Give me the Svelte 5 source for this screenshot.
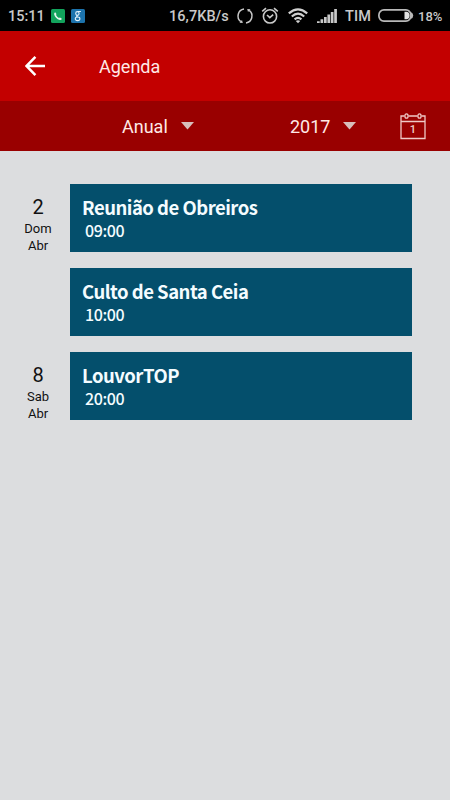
<script>
  let period = "Anual";
  let year = "2017";

  const days = [
    {
      day: 2,
      week: "Dom",
      month: "Abr",
      events: [
        { title: "Reunião de Obreiros", time: "09:00" },
        { title: "Culto de Santa Ceia", time: "10:00" },
      ],
    },
    {
      day: 8,
      week: "Sab",
      month: "Abr",
      events: [{ title: "LouvorTOP", time: "20:00" }],
    },
  ];
</script>

<div class="screen">
  <div class="status">
    <span class="clock">15:11</span>
    <svg class="app" width="14" height="14" viewBox="0 0 14 14">
      <rect width="14" height="14" rx="1.5" fill="#12a35c" />
      <path d="M4.2 3.2 5.5 4.9 5 6.1Q6 8 7.9 9L9 8.4 10.9 9.7Q10.4 11.4 8.8 11 4.2 9.5 3.1 5.2 3 3.7 4.2 3.2Z" fill="#e4f5ec" />
    </svg>
    <svg class="app google" width="14" height="14" viewBox="0 0 14 14">
      <rect width="14" height="14" rx="1.5" fill="#1c73ac" />
      <g fill="none" stroke="#e2f2fb" stroke-width="1.1">
        <ellipse cx="6.4" cy="4.5" rx="1.7" ry="1.9" />
        <path d="M7 2.5H9.9M6 6.4Q5 7.3 6.6 7.8" />
        <ellipse cx="6.6" cy="9.8" rx="2.3" ry="1.8" />
      </g>
    </svg>
    <span class="speed">16,7KB/s</span>
    <svg class="sync" width="18" height="18" viewBox="0 0 18 18">
      <path d="M8 2.100A7 7 0 0 0 4.800 14.600M10 15.900A7 7 0 0 0 13.200 3.400" fill="none" stroke="#c9c9c9" stroke-width="1.500" />
      <path d="M3.500 15.800 6.800 15.900 6 13ZM14.500 2.200 11.200 2.100 12 5Z" fill="#c9c9c9" />
    </svg>
    <svg class="alarm" width="18" height="18" viewBox="0 0 18 18">
      <g fill="none" stroke="#c9c9c9" stroke-width="1.6">
        <circle cx="9" cy="9.4" r="6.6" />
        <path d="M1.200 4.400 5 1.200M16.800 4.400 13 1.200M6 8 8.800 10.600 12.200 7.600" />
      </g>
    </svg>
    <svg class="wifi" width="20" height="16" viewBox="0 0 20 16">
      <g fill="none" stroke="#d0d0d0" stroke-width="2.2">
        <path d="M.8 5.400Q10-2.600 19.200 5.400M3.800 8.500Q10 2.800 16.200 8.500M6.600 11.400Q10 8.200 13.400 11.400" />
      </g>
      <path d="M7.8 13Q10 11.400 12.200 13L10 15.200Z" fill="#d0d0d0" />
    </svg>
    <svg class="signal" width="20" height="14" viewBox="0 0 20 14">
      <path d="M0 12.200h2.700V14H0zM3.500 10.200h2.700V14H3.500zM7 8h2.700v6H7zM10.400 5.600h2.700V14h-2.700zM13.800 3h2.700v11h-2.700zM17.200 0h2.700v14h-2.700z" fill="#c8c8c8" />
    </svg>
    <span class="carrier">TIM</span>
    <svg class="battery" width="36" height="13" viewBox="0 0 36 13">
      <rect x=".9" y=".9" width="32" height="11.2" rx="5" fill="none" stroke="#b9b9b9" stroke-width="1.7" />
      <path d="M26.500 2.700h2.500Q31.600 3.200 31.600 6.500T29 10.300h-2.500z" fill="#e4e4e4" />
      <path d="M33 3.200Q35.200 4 35.200 6.500T33 9.800z" fill="#b9b9b9" />
    </svg>
    <span class="percent">18%</span>
  </div>

  <header>
    <svg class="back" width="20" height="20" viewBox="0 0 20 20">
      <path d="M10.400 .9 1.600 10l8.800 9.100M1.600 10H20" fill="none" stroke="#fff" stroke-width="2.500" />
    </svg>
    <h1>Agenda</h1>
  </header>

  <div class="filters">
    <div class="select period">
      <span>{period}</span>
      <svg width="13" height="8" viewBox="0 0 13 8"><path d="M0 0h13L6.5 7.5z" fill="#d8bebb" /></svg>
    </div>
    <div class="select year">
      <span>{year}</span>
      <svg width="13" height="8" viewBox="0 0 13 8"><path d="M0 0h13L6.5 7.5z" fill="#d8bebb" /></svg>
    </div>
    <svg class="calendar" width="26" height="27" viewBox="0 0 26 27">
      <g fill="none" stroke="#f0c9c6" stroke-width="1.3">
        <path d="M4.500 3H1v22.500h24V3h-3.500M8.500 3h9M1 8.500h24" />
        <ellipse cx="6.500" cy="3" rx="1.600" ry="2.200" />
        <ellipse cx="19.500" cy="3" rx="1.600" ry="2.200" />
      </g>
      <text x="13" y="20">1</text>
    </svg>
  </div>

  <main>
    {#each days as item}
      <section>
        <div class="date">
          <strong>{item.day}</strong>
          <span>{item.week}</span>
          <span>{item.month}</span>
        </div>
        <div class="events">
          {#each item.events as event}
            <article>
              <h2>{event.title}</h2>
              <time>{event.time}</time>
            </article>
          {/each}
        </div>
      </section>
    {/each}
  </main>
</div>

<style>
  :global(body) {
    margin: 0;
    background: #dcdddf;
  }

  .screen {
    width: 450px;
    height: 800px;
    overflow: hidden;
    background: #dcdddf;
    font-family: Roboto, sans-serif;
  }

  svg {
    display: block;
    flex: none;
  }

  .status {
    display: flex;
    align-items: center;
    height: 31px;
    background: #000;
    color: #c9c9c9;
    font-size: 14.5px;
    font-weight: 500;
    line-height: 29px;
    white-space: nowrap;
  }

  .status span {
    flex: none;
    padding-top: 2px;
  }

  .status .clock {
    width: 43px;
    padding-left: 8px;
  }

  .google {
    margin-left: 6px;
  }

  .speed {
    width: 67px;
    margin-left: 84px;
    letter-spacing: 0.05px;
  }

  .alarm {
    margin-left: 7px;
  }

  .wifi {
    margin-left: 9px;
  }

  .signal {
    margin-left: 9px;
  }

  .carrier {
    width: 27px;
    margin-left: 8px;
    letter-spacing: 0.2px;
  }

  .battery {
    margin-left: 6px;
  }

  .percent {
    margin-left: 4px;
    font-size: 13px;
  }

  header {
    display: flex;
    align-items: center;
    height: 70px;
    padding-left: 25px;
    background: #c30000;
  }

  h1 {
    margin: 2px 0 0 54px;
    color: #ffe9e7;
    font-size: 18px;
    font-weight: 400;
    line-height: 24px;
  }

  .filters {
    display: flex;
    align-items: center;
    height: 50px;
    background: #990000;
  }

  .select {
    display: flex;
    align-items: center;
    justify-content: space-between;
    color: #ffe9e7;
    font-size: 18px;
    line-height: 24px;
  }

  .select span {
    padding-top: 2px;
  }

  .period {
    width: 72px;
    margin-left: 122px;
  }

  .year {
    width: 66px;
    margin-left: 96px;
  }

  .calendar {
    margin-left: 44px;
  }

  .calendar text {
    fill: #f0d3c8;
    font-size: 11px;
    font-weight: 500;
    text-anchor: middle;
  }

  main {
    padding-top: 32.5px;
  }

  section {
    display: flex;
    margin-bottom: 15.5px;
  }

  .date {
    display: flex;
    flex: none;
    flex-direction: column;
    align-items: center;
    width: 64px;
    padding: 11px 0 0 6px;
    color: #111;
    font-size: 13px;
    line-height: 17.5px;
  }

  .date strong {
    font-size: 20px;
    font-weight: 400;
    line-height: 25px;
  }

  .events {
    display: flex;
    flex-direction: column;
    gap: 15.5px;
    width: 342px;
  }

  article {
    height: 68.5px;
    padding: 10px 0 0 12px;
    box-sizing: border-box;
    background: #044f6c;
    color: #f4fcff;
    font-family: "Noto Sans CJK SC", sans-serif;
  }

  h2 {
    margin: 0;
    font-size: 18.5px;
    font-weight: 700;
    letter-spacing: -0.5px;
    line-height: 26px;
    white-space: nowrap;
  }

  time {
    display: block;
    padding-left: 3px;
    font-size: 16px;
    font-weight: 500;
    letter-spacing: -0.4px;
    line-height: 20px;
  }
</style>
